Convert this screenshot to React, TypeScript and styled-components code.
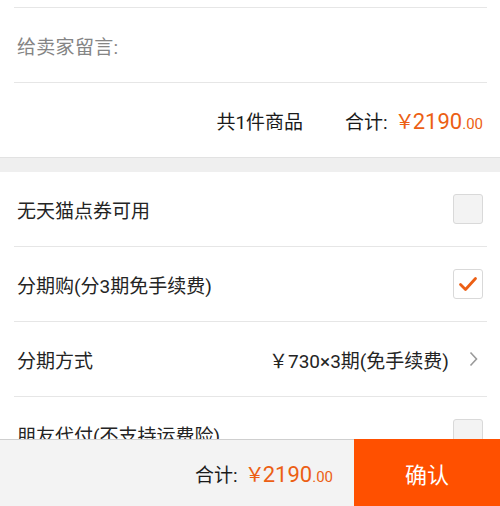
import React from "react";
import styled, { createGlobalStyle } from "styled-components";

const Global = createGlobalStyle`
  html, body { margin: 0; padding: 0; background: #ffffff; }
  body {
    width: 500px; height: 506px; overflow: hidden;
    font-family: Roboto, "Noto Sans CJK SC", "Noto Sans", sans-serif;
    -webkit-font-smoothing: antialiased;
  }
`;

const Page = styled.div`
  display: flex;
  flex-direction: column;
  width: 500px;
  background: #efefef;
`;

const Card = styled.section<{ $top?: number }>`
  background: #ffffff;
  padding: ${(p) => p.$top ?? 0}px 13px 0 14px;
`;

const TopCard = styled(Card)`
  border-bottom: 1px solid #e2e2e2;
`;

const Gap = styled.div`
  height: 14px;
  background: #efefef;
`;

const Row = styled.div<{ $h?: number }>`
  display: flex;
  align-items: center;
  height: ${(p) => p.$h ?? 75}px;
  box-sizing: border-box;
  padding: 0 4px 0 3px;
  border-top: 1px solid #e6e6e6;
  font-size: 19px;
  color: #242424;
`;

const ListRow = styled(Row)`
  border-top: none;
  border-bottom: 1px solid #e6e6e6;
`;

const Hint = styled.span`
  color: #858585;
  letter-spacing: 0.3px;
`;

const Label = styled.span`
  flex: 1;
  white-space: nowrap;
`;

const SummaryRow = styled(Row)`
  justify-content: flex-end;
  color: #1a1a1a;
`;

const Count = styled.span`
  margin-right: 42px;
`;

const Price = styled.span`
  color: #ec5f14;
  font-size: 22px;
  margin-left: 7px;
`;

const Yen = styled.span`
  font-family: "Noto Sans CJK SC", sans-serif;
  font-size: 20px;
  margin-right: -2px;
`;

const Cents = styled.span`
  font-size: 15px;
`;

const Box = styled.span<{ $checked?: boolean }>`
  width: 30px;
  height: 30px;
  box-sizing: border-box;
  border: 1px solid #d9d9d9;
  border-radius: 3px;
  background: ${(p) => (p.$checked ? "#ffffff" : "#f3f3f3")};
  display: flex;
  align-items: center;
  justify-content: center;
`;

const Value = styled.span`
  color: #242424;
  margin-right: 20px;
`;

const ChevronWrap = styled.span`
  display: flex;
  margin-right: 5px;
`;

const BottomBar = styled.footer`
  position: fixed;
  left: 0;
  right: 0;
  bottom: 0;
  height: 67px;
  display: flex;
  align-items: stretch;
  background: #f3f3f3;
  border-top: 1px solid #cfcfcf;
  box-sizing: border-box;
`;

const Total = styled.div`
  flex: 1;
  display: flex;
  align-items: center;
  justify-content: flex-end;
  padding-right: 21px;
  font-size: 19px;
  color: #1a1a1a;
`;

const Confirm = styled.button`
  width: 146px;
  border: none;
  margin: -1px 0 0;
  background: #ff5000;
  color: #ffffff;
  font-family: inherit;
  font-size: 22px;
  padding: 0;
`;

const Check = () => (
  <svg width="20" height="16" viewBox="0 0 20 16">
    <path d="M2.5 8.5 L7.5 13.5 L17.5 2.5" fill="none" stroke="#ec5f14" strokeWidth="2.8" strokeLinecap="round" strokeLinejoin="round" />
  </svg>
);

const Chevron = () => (
  <svg width="9" height="16" viewBox="0 0 9 16">
    <path d="M1.5 1.5 L7.5 8 L1.5 14.5" fill="none" stroke="#9a9a9a" strokeWidth="1.6" />
  </svg>
);

const Amount = () => (
  <Price>
    <Yen>￥</Yen>2190<Cents>.00</Cents>
  </Price>
);

export default function App() {
  return (
    <>
      <Global />
      <Page>
        <TopCard $top={7}>
          <Row $h={75}>
            <Hint>给卖家留言:</Hint>
          </Row>
          <SummaryRow $h={75}>
            <Count>共1件商品</Count>
            合计:
            <Amount />
          </SummaryRow>
        </TopCard>
        <Gap />
        <Card>
          <ListRow>
            <Label>无天猫点券可用</Label>
            <Box />
          </ListRow>
          <ListRow>
            <Label>分期购(分3期免手续费)</Label>
            <Box $checked>
              <Check />
            </Box>
          </ListRow>
          <ListRow>
            <Label>分期方式</Label>
            <Value>￥730×3期(免手续费)</Value>
            <ChevronWrap>
              <Chevron />
            </ChevronWrap>
          </ListRow>
          <ListRow>
            <Label>朋友代付(不支持运费险)</Label>
            <Box />
          </ListRow>
        </Card>
      </Page>
      <BottomBar>
        <Total>
          合计:
          <Amount />
        </Total>
        <Confirm>确认</Confirm>
      </BottomBar>
    </>
  );
}
